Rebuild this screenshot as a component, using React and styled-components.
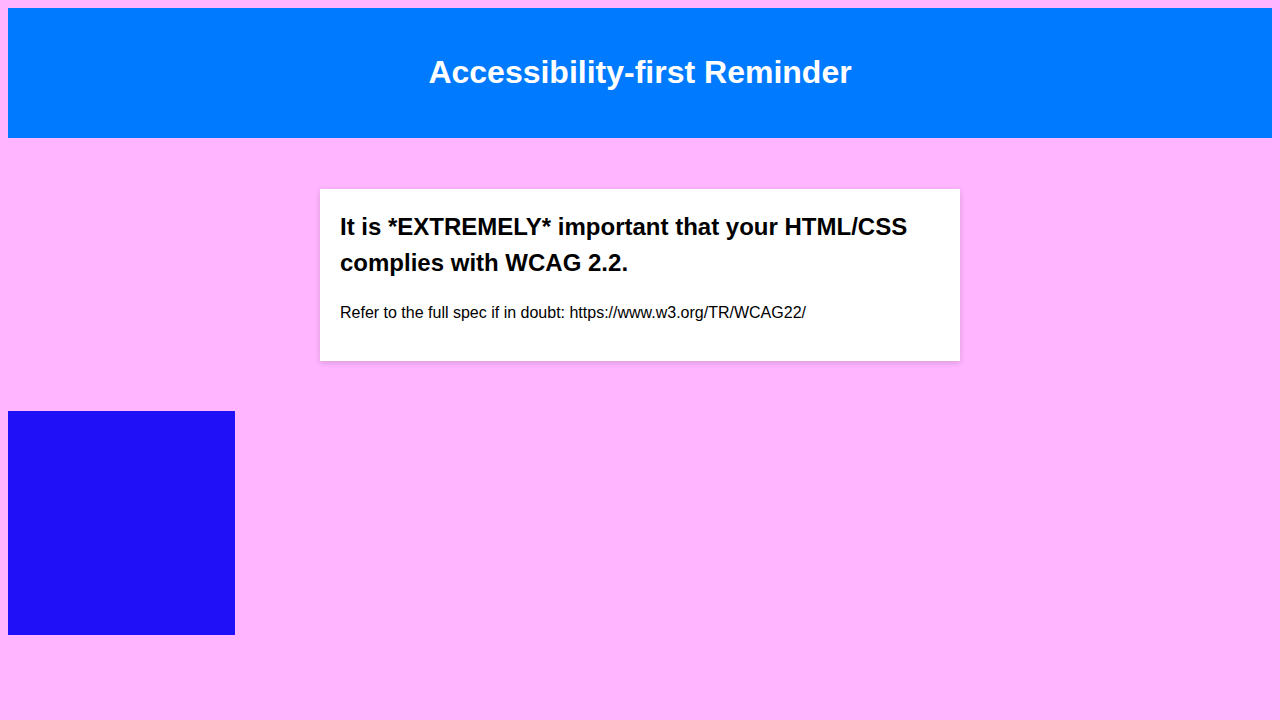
import React from "react";
import styled, { createGlobalStyle } from "styled-components";

const GlobalStyle = createGlobalStyle`
  body {
    margin: 8px;
    background: #ffb5ff;
    font-family: "Liberation Sans", Arial, sans-serif;
    color: #000;
  }
`;

const Header = styled.header`
  background: #007bff;
  padding: 40px 0 42px;
  text-align: center;
`;

const Title = styled.h1`
  margin: 0;
  color: #fff;
  font-size: 32px;
  line-height: 48px;
  font-weight: 700;
`;

const Main = styled.main`
  padding-top: 51px;
`;

const Card = styled.section`
  width: 600px;
  margin: 0 auto;
  padding: 20px;
  background: #fff;
  box-shadow: 0 2px 6px rgba(0, 0, 0, 0.15);
`;

const CardTitle = styled.h2`
  margin: 0 0 20px;
  font-size: 24px;
  line-height: 36px;
  font-weight: 700;
`;

const CardText = styled.p`
  margin: 0 0 16px;
  font-size: 16px;
  line-height: 24px;
`;

const Block = styled.div`
  width: 227px;
  height: 224px;
  margin-top: 50px;
  background: ${(p) => p.color};
`;

const App = () => {
  return (
    <>
      <GlobalStyle />
      <Header>
        <Title>Accessibility-first Reminder</Title>
      </Header>
      <Main>
        <Card>
          <CardTitle>
            It is *EXTREMELY* important that your HTML/CSS complies with WCAG 2.2.
          </CardTitle>
          <CardText>
            Refer to the full spec if in doubt: https://www.w3.org/TR/WCAG22/
          </CardText>
        </Card>
        <Block color="#1f10f8" />
      </Main>
    </>
  );
};

export default App;
